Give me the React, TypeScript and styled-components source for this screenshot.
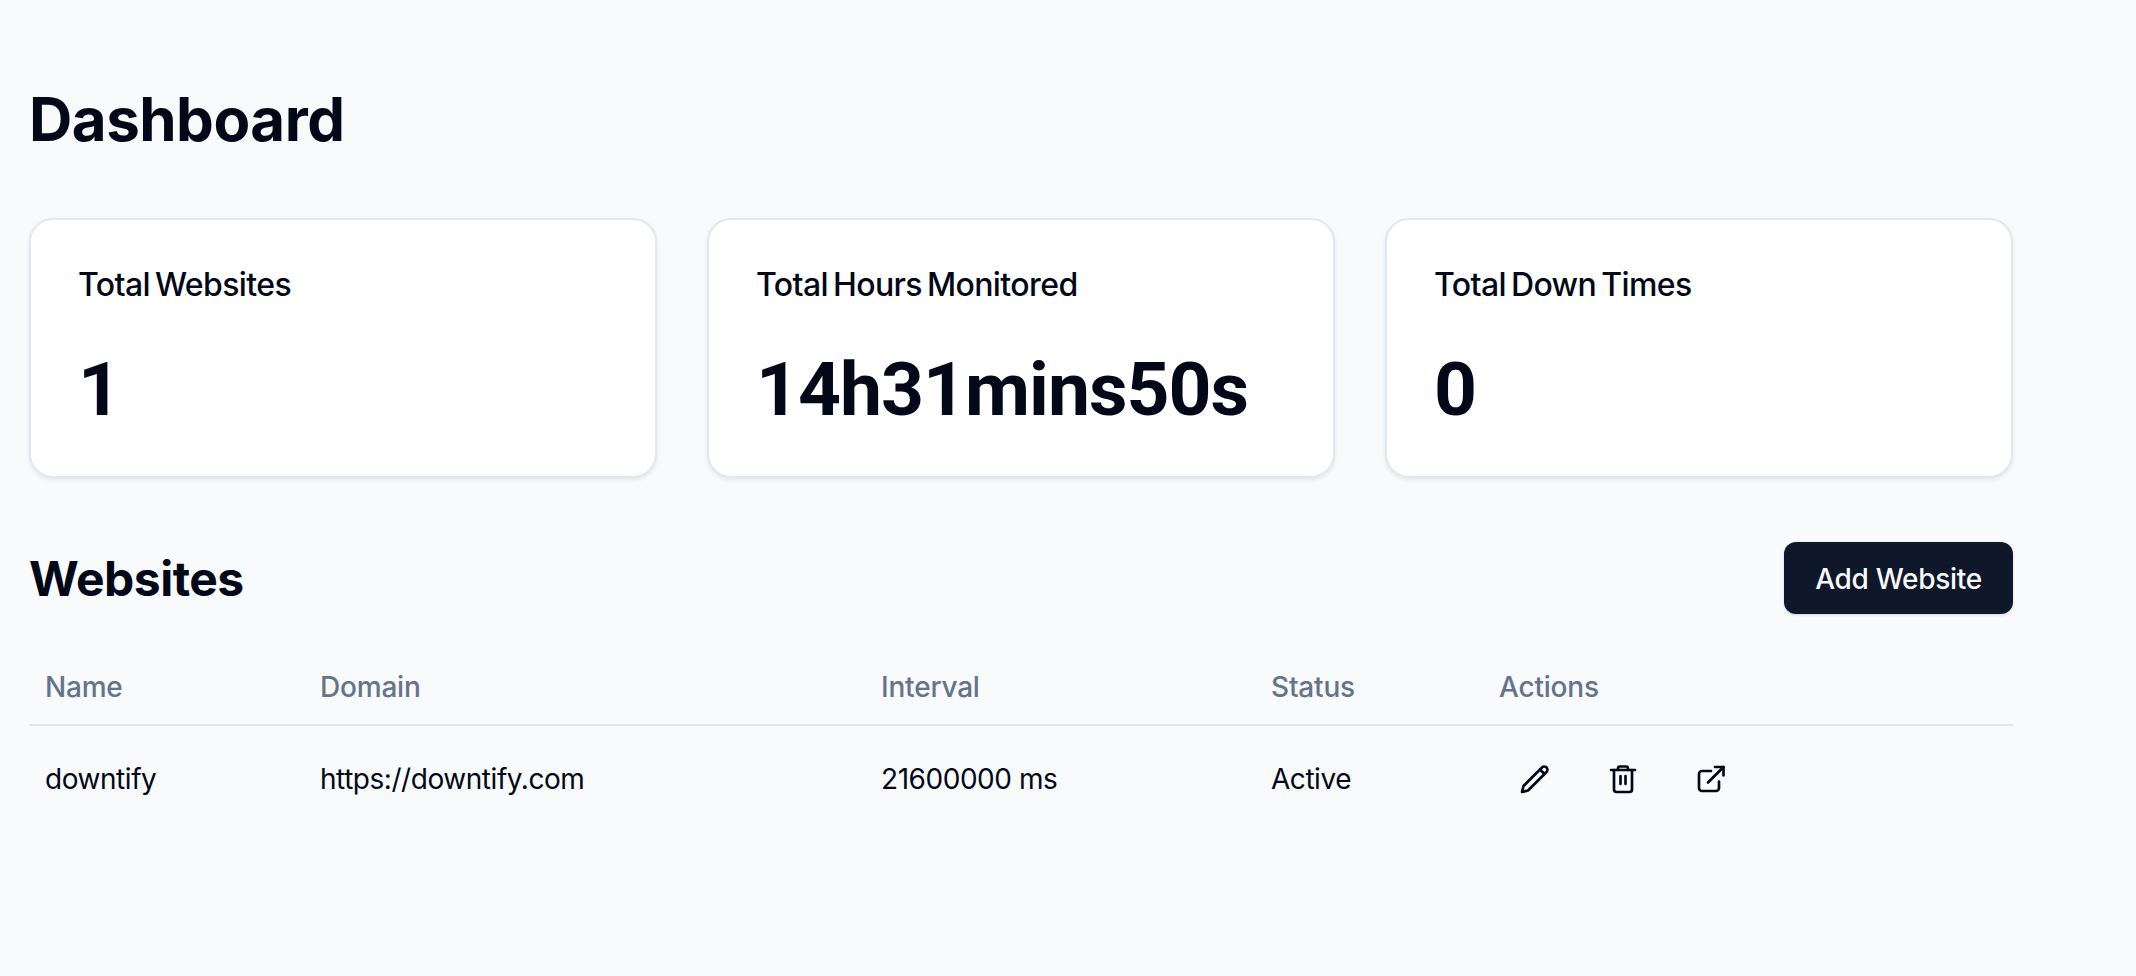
import React from "react";
import styled, { createGlobalStyle } from "styled-components";

const Global = createGlobalStyle`
  html, body { margin: 0; padding: 0; background: #f8fafc; }
  body { font-family: Inter, "Liberation Sans", sans-serif; color: #020817; }
`;

const Page = styled.main`
  box-sizing: border-box;
  width: 2136px;
  min-height: 976px;
  padding: 80px 123px 0 29px;
  background: #f8fafc;
`;

const Title = styled.h1`
  margin: 0;
  font-size: 60px;
  line-height: 78px;
  font-weight: 700;
  letter-spacing: -0.5px;
`;

const Cards = styled.section`
  display: grid;
  grid-template-columns: repeat(3, 1fr);
  gap: 50px;
  margin-top: 60px;
`;

const Card = styled.article`
  box-sizing: border-box;
  height: 260px;
  padding: 45px 47px;
  background: #fff;
  border: 2px solid #e2e8f0;
  border-radius: 24px;
  box-shadow: 0 2px 4px rgba(2, 8, 23, 0.08);
`;

const CardLabel = styled.h3`
  margin: 0;
  font-size: 32px;
  line-height: 40px;
  font-weight: 500;
  letter-spacing: -0.6px;
  word-spacing: -3px;
`;

const CardValue = styled.div`
  margin-top: 39px;
  font-family: Roboto, Inter, sans-serif;
  font-size: 75px;
  line-height: 90px;
  font-weight: 700;
  letter-spacing: -1px;
`;

const SectionHead = styled.header`
  display: flex;
  align-items: center;
  justify-content: space-between;
  height: 72px;
  margin-top: 65px;
`;

const SectionTitle = styled.h2`
  margin: 0;
  font-size: 48px;
  line-height: 72px;
  font-weight: 700;
  letter-spacing: -0.5px;
`;

const AddButton = styled.button`
  box-sizing: border-box;
  width: 229px;
  height: 72px;
  margin-bottom: 2px;
  padding: 2px 0 0;
  border: 0;
  border-radius: 12px;
  background: #0f172a;
  color: #f8fafc;
  font-family: inherit;
  font-size: 28px;
  font-weight: 500;
  letter-spacing: -0.3px;
  box-shadow: 0 1px 3px rgba(2, 8, 23, 0.15);
`;

const Table = styled.table`
  width: 100%;
  margin-top: 32px;
  border-collapse: collapse;
  table-layout: fixed;
  font-size: 28px;
`;

const HeadRow = styled.tr`
  border-bottom: 2px solid #e2e8f0;
`;

const Th = styled.th`
  box-sizing: border-box;
  height: 78px;
  padding: 2px 16px 0;
  text-align: left;
  font-weight: 500;
  color: #64748b;
  letter-spacing: -0.2px;
`;

const Td = styled.td`
  height: 106px;
  padding: 0 16px;
  font-weight: 400;
  letter-spacing: -0.45px;
`;

const Actions = styled.div`
  display: flex;
  align-items: center;
  gap: 56px;
  padding-left: 20px;
`;

const IconBtn = styled.span`
  display: inline-flex;
  width: 32px;
  height: 32px;
  align-items: center;
  justify-content: center;
  svg { width: 32px; height: 32px; fill: none; stroke: #020817; stroke-width: 2.67; stroke-linecap: round; stroke-linejoin: round; }
`;

const cols = [275, 561, 390, 228, 530];

export default function App() {
  return (
    <>
      <Global />
      <Page>
        <Title>Dashboard</Title>
        <Cards>
          <Card><CardLabel>Total Websites</CardLabel><CardValue>1</CardValue></Card>
          <Card><CardLabel>Total Hours Monitored</CardLabel><CardValue>14h31mins50s</CardValue></Card>
          <Card><CardLabel>Total Down Times</CardLabel><CardValue>0</CardValue></Card>
        </Cards>
        <SectionHead>
          <SectionTitle>Websites</SectionTitle>
          <AddButton>Add Website</AddButton>
        </SectionHead>
        <Table>
          <colgroup>{cols.map((w, i) => <col key={i} width={w} />)}</colgroup>
          <thead>
            <HeadRow>
              <Th>Name</Th><Th>Domain</Th><Th>Interval</Th><Th>Status</Th><Th>Actions</Th>
            </HeadRow>
          </thead>
          <tbody>
            <tr>
              <Td>downtify</Td>
              <Td>https://downtify.com</Td>
              <Td>21600000 ms</Td>
              <Td>Active</Td>
              <Td>
                <Actions>
                  <IconBtn><svg viewBox="0 0 32 32"><path d="M23 4.5a3.18 3.18 0 0 1 4.5 4.5L9 27.5l-6 1.5 1.5-6Z"/><path d="M21 6.5l4.5 4.5"/></svg></IconBtn>
                  <IconBtn><svg viewBox="0 0 32 32"><path d="M4 7h24"/><path d="M7 7v19.5A2.5 2.5 0 0 0 9.500 29h13a2.500 2.500 0 0 0 2.500-2.500V7"/><path d="M11 7V5.500a2 2 0 0 1 2-2h6a2 2 0 0 1 2 2V7"/><path d="M13.500 13v8"/><path d="M18.500 13v8"/></svg></IconBtn>
                  <IconBtn><svg viewBox="0 0 32 32"><path d="M24 18.500V25a3 3 0 0 1-3 3H7a3 3 0 0 1-3-3V11a3 3 0 0 1 3-3h9"/><path d="M20 4h8.500v8.500"/><path d="M13 19.500 28.500 4"/></svg></IconBtn>
                </Actions>
              </Td>
            </tr>
          </tbody>
        </Table>
      </Page>
    </>
  );
}
